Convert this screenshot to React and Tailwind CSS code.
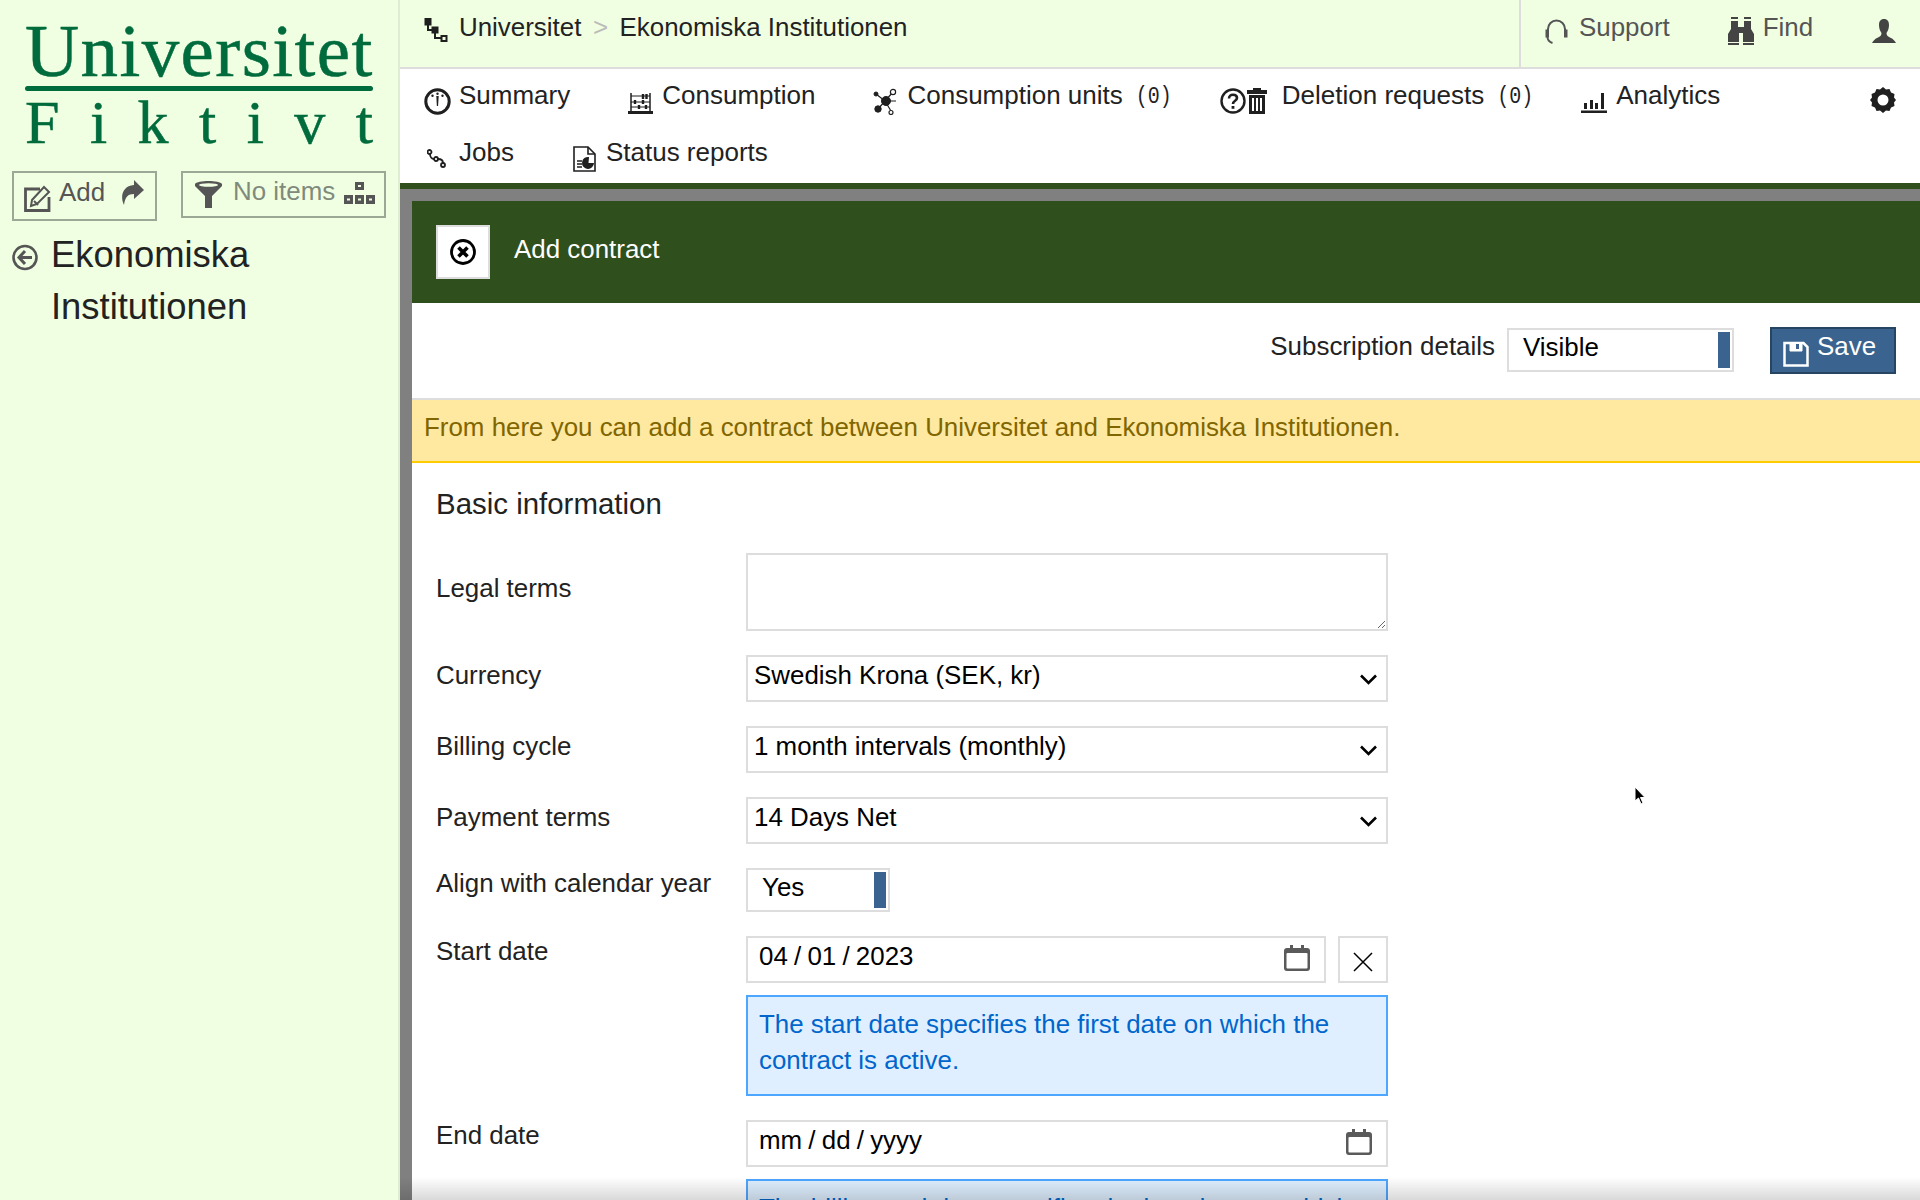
import React from 'react';

const ink = '#1f1f1f';

function Logo() {
  return (
    <div className="pt-[16px] px-[25px] text-[#006b3c] font-['Liberation_Serif',serif] [-webkit-text-stroke:0.5px_#006b3c]">
      <div className="text-[75px] leading-[70px] tracking-[1.4px] whitespace-nowrap">Universitet</div>
      <div className="h-[5px] rounded-full bg-[#006b3c]" />
      <div className="flex justify-between text-[62px] leading-[66px] mt-[-2px]">
        {'Fiktivt'.split('').map((c, i) => <span key={i}>{c}</span>)}
      </div>
    </div>
  );
}

const IconBreadcrumb = () => (
  <svg width="24" height="24" viewBox="0 0 24 24" fill="none" stroke={ink}>
    <rect x="1" y="0" width="6" height="7" fill={ink} />
    <rect x="8" y="9" width="6" height="6" fill={ink} />
    <rect x="17.500" y="18" width="5" height="5" strokeWidth="2" />
    <path d="M4 7v5h4M11 15v5h6" strokeWidth="2" />
  </svg>
);

const IconSupport = () => (
  <svg width="23" height="28" viewBox="0 0 23 28" fill="none" stroke="#555">
    <path d="M3 16V11a8.500 8.500 0 0 1 17 0v5" strokeWidth="2" />
    <rect x="1" y="12" width="2.500" height="7" fill="#555" />
    <rect x="19.500" y="12" width="2.500" height="7" fill="#555" />
    <path d="M2.500 19c0 3 2 5 5 6" strokeWidth="2" />
  </svg>
);

const IconFind = () => (
  <svg width="26" height="28" viewBox="0 0 26 28" fill="#444">
    <rect x="3" y="0" width="7" height="2" />
    <rect x="16" y="0" width="7" height="2" />
    <path d="M3 4h7v6h6V4h7v8l3 5v8H15V16h-4v9H0v-8l3-5z" />
    <rect x="0" y="26" width="11" height="2" />
    <rect x="15" y="26" width="11" height="2" />
  </svg>
);

const IconUser = () => (
  <svg width="24" height="24" viewBox="0 0 24 24" fill="#444">
    <path d="M12 0c3.500 0 5 2.500 5 6 0 3-1 6-2.500 8 0 2.500 1.500 3.500 4.500 5 2 1 3.500 2.500 5 5H0c1.500-2.500 3-4 5-5 3-1.500 4.500-2.500 4.500-5C8 12 7 9 7 6c0-3.500 1.500-6 5-6z" />
  </svg>
);

const IconGauge = () => (
  <svg width="27" height="27" viewBox="0 0 27 27" fill="none" stroke={ink}>
    <circle cx="13.500" cy="13.500" r="11.700" strokeWidth="3" />
    <path d="M12.300 8h2.400l-.6 10h-1.200z" fill={ink} stroke="none" />
    <circle cx="13.500" cy="5.800" r="1.200" fill={ink} stroke="none" />
    <circle cx="8.500" cy="7.800" r="1.200" fill={ink} stroke="none" />
    <circle cx="18.500" cy="7.800" r="1.200" fill={ink} stroke="none" />
  </svg>
);

const IconAbacus = () => (
  <svg width="25" height="22" viewBox="0 0 25 22" fill="none" stroke={ink}>
    <path d="M3 1v18M22 1v18" strokeWidth="1.500" />
    <path d="M3 4h19M3 10h19M3 15h19" strokeWidth="1.200" />
    <path d="M0 20.500h25" strokeWidth="3" />
    <path d="M15 2v5M18.500 2v5M7 8v4M15 8v4M11 13v4M18 13v4" strokeWidth="2.400" />
  </svg>
);

const IconNetwork = () => (
  <svg width="24" height="27" viewBox="0 0 24 27" fill="none" stroke={ink}>
    <path d="M12 13L3 6M12 13L5 21M12 13L20 4M12 13h11M12 13l6 10" strokeWidth="1.200" />
    <circle cx="13" cy="13" r="4.500" fill={ink} />
    <circle cx="3" cy="6" r="2" fill={ink} />
    <circle cx="5" cy="21" r="3.200" fill={ink} />
    <circle cx="20" cy="4" r="2.600" fill="#fff" strokeWidth="1.200" />
    <circle cx="18" cy="24.500" r="2" fill="#fff" strokeWidth="1.200" />
  </svg>
);

const IconQuestion = () => (
  <svg width="26" height="26" viewBox="0 0 26 26" fill="none" stroke={ink}>
    <circle cx="13" cy="13" r="11.500" strokeWidth="2.400" />
    <path d="M9 10.500c0-2.500 1.800-3.700 4-3.700s4 1.200 4 3.200c0 3-4 2.500-4 6" strokeWidth="2.600" />
    <rect x="11.600" y="18" width="2.800" height="2.800" fill={ink} stroke="none" />
  </svg>
);

const IconTrash = () => (
  <svg width="20" height="26" viewBox="0 0 20 26" fill={ink}>
    <path d="M6 0h8v2h6v4H0V2h6z" />
    <path d="M2 7h16v19H2zM5 10v13h2V10zM9 10v13h2V10zM13 10v13h2V10z" fillRule="evenodd" />
  </svg>
);

const IconBars = () => (
  <svg width="26" height="20" viewBox="0 0 26 20" fill={ink}>
    <rect x="3" y="10" width="3" height="6" />
    <rect x="9" y="7" width="3" height="9" />
    <rect x="14" y="10" width="3" height="6" />
    <rect x="20" y="0" width="3" height="16" />
    <rect x="0" y="17.500" width="26" height="2.500" />
  </svg>
);

const IconGear = () => (
  <svg width="26" height="26" viewBox="0 0 26 26" fill={ink}>
    <path fillRule="evenodd" d="M13 0l3 2.500 3.500-.5 1.500 3.500 3.500 1.500-.5 3.500 2 2.500-2 2.500.5 3.500-3.500 1.500-1.500 3.500-3.500-.5-3 2.500-3-2.500-3.500.5L5 20.500 1.500 19l.5-3.500L0 13l2-2.500-.5-3.500L5 5.500 6.500 2l3.500.5zM13 7.500a5.500 5.500 0 1 0 0 11 5.500 5.500 0 0 0 0-11z" />
  </svg>
);

const IconJobs = () => (
  <svg width="19" height="19" viewBox="0 0 19 19" fill="none" stroke={ink} strokeWidth="1.800">
    <circle cx="2.500" cy="3" r="2" />
    <circle cx="9" cy="10" r="2" />
    <circle cx="16" cy="16" r="2" />
    <path d="M3 5c0 3 2 5 4 5M11 10c3 0 5 1 5 4" />
  </svg>
);

const IconReport = () => (
  <svg width="23" height="26" viewBox="0 0 23 26" fill="none" stroke={ink}>
    <path d="M1 1h14l7 7v17H1z" strokeWidth="1.600" />
    <path d="M15 1v7h7" strokeWidth="1.600" />
    <path d="M4 15h5M4 18h5M4 21h5" strokeWidth="1.600" />
    <path d="M16 11a6 6 0 1 0 5 6h-5.500z" fill={ink} stroke="none" />
  </svg>
);

const IconClose = () => (
  <svg width="26" height="26" viewBox="0 0 26 26" fill="none" stroke="#000">
    <circle cx="13" cy="13" r="11.500" strokeWidth="2.800" />
    <path d="M8.500 8.500l9 9M17.500 8.500l-9 9" strokeWidth="3.600" />
  </svg>
);

const IconSave = () => (
  <svg width="26" height="26" viewBox="0 0 26 26" fill="none" stroke="#fff">
    <path d="M1.500 2h19l4 4v18.500h-23z" strokeWidth="2.500" />
    <path d="M7 2v8h12V2" fill="#fff" strokeWidth="1" />
    <rect x="13" y="3" width="3" height="5" fill="#3a648f" stroke="none" />
  </svg>
);

const IconEdit = () => (
  <svg width="27" height="27" viewBox="0 0 27 27" fill="none" stroke="#555">
    <path d="M16 4H1.500v21.500H25V12" strokeWidth="2.800" />
    <path d="M8 15L20 2l5 5-12 12-6 2z" strokeWidth="2" />
    <path d="M10 16l4 4" strokeWidth="2" />
  </svg>
);

const IconShare = () => (
  <svg width="23" height="25" viewBox="0 0 23 25" fill="#555">
    <path d="M13 0l10 10-10 9v-5C7 14 4 17 3 25 -1 17 1 6 13 5z" />
  </svg>
);

const IconFunnel = () => (
  <svg width="27" height="27" viewBox="0 0 27 27" fill="#555">
    <path d="M0 3c2-4 25-4 27 0v2L17 15v12h-7V15L0 5z" />
    <ellipse cx="13.500" cy="4" rx="9.500" ry="1.800" fill="#f0ffe2" />
  </svg>
);

const IconTree = () => (
  <svg width="31" height="22" viewBox="0 0 31 22" fill="#555">
    <path fillRule="evenodd" d="M11 0h9v8h-9zM14 3v2h3V3zM0 13h9v9H0zM3 16.500v2h3v-2zM11 13h9v9h-9zM14 16.500v2h3v-2zM22 13h9v9h-9zM25 16.500v2h3v-2z" />
  </svg>
);

const IconBack = () => (
  <svg width="26" height="27" viewBox="0 0 26 27" fill="none" stroke="#555">
    <circle cx="13" cy="13.500" r="11.500" strokeWidth="2.600" />
    <path d="M13 7l-6 6.500 6 6.500M7 13.500h13" strokeWidth="3" />
  </svg>
);

const IconX = () => (
  <svg width="20" height="20" viewBox="0 0 20 20" fill="none" stroke="#000" strokeWidth="1.500">
    <path d="M1 1l18 18M19 1L1 19" />
  </svg>
);

const IconCalendar = () => (
  <svg width="26" height="26" viewBox="0 0 26 26" fill="none">
    <path d="M6 0h3v3h8V0h3v3h3a3 3 0 0 1 3 3v17a3 3 0 0 1-3 3H3a3 3 0 0 1-3-3V6a3 3 0 0 1 3-3h3z" fill="#5a5a5a" />
    <rect x="2.500" y="8" width="21" height="15.500" rx="1" fill="#fff" />
  </svg>
);

const IconChevron = () => (
  <svg width="17" height="11" viewBox="0 0 17 11" fill="none" stroke="#000" strokeWidth="2.600">
    <path d="M1 1.500l7.500 7.500L16 1.500" />
  </svg>
);

function NavItem({ icon, iconTop, gap, left, count, children }) {
  return (
    <div className="flex items-start" style={{ marginLeft: left }}>
      <div style={{ marginTop: iconTop, marginRight: gap }} className="flex gap-[1px]">{icon}</div>
      <span className="whitespace-nowrap">{children}</span>
      {count && <span className="ml-[13px] mt-[2px] font-['Liberation_Mono',monospace] text-[20px] scale-y-[1.2]">(0)</span>}
    </div>
  );
}

function Toggle({ label, className }) {
  return (
    <div className={`h-[44px] border-2 border-[#ddd] bg-white flex items-start justify-between pl-[14px] pr-[2px] py-[2px] text-black ${className}`}>
      <span className="leading-[32px] mt-[-1px]">{label}</span>
      <div className="w-[12px] h-[36px] bg-[#3a648f]" />
    </div>
  );
}

function Select({ value }) {
  return (
    <div className="relative">
      <select
        defaultValue={value}
        className="block w-full h-[47px] border-2 border-[#ddd] bg-white text-black pl-[6px] pr-[30px] pb-[8px] rounded-none appearance-none text-[25.92px]"
      >
        <option>{value}</option>
      </select>
      <div className="absolute right-[11px] top-[19px] pointer-events-none"><IconChevron /></div>
    </div>
  );
}

function DateField({ value, className }) {
  return (
    <div className={`h-[47px] border-2 border-[#ddd] bg-white text-black flex items-start justify-between pl-[11px] pr-[14px] ${className}`}>
      <span className="mt-[2px] whitespace-nowrap [word-spacing:-1px]">{value}</span>
      <div className="mt-[7px]"><IconCalendar /></div>
    </div>
  );
}

function Help({ children }) {
  return (
    <div className="border-2 border-[#4da6ff] bg-[#dfefff] text-[#0066cc] px-[11px] pt-[9px] pb-[16px] leading-[36px]">
      {children}
    </div>
  );
}

function Row({ label, top = 4, children }) {
  return (
    <div className="flex mb-[24px]">
      <div className="w-[310px] shrink-0 leading-[32px]" style={{ marginTop: top }}>{label}</div>
      <div className="w-[642px] shrink-0">{children}</div>
    </div>
  );
}

export default function App() {
  return (
    <div className="relative flex h-[1200px] overflow-hidden bg-white text-[25.92px] leading-[32px] text-[#222] font-['Liberation_Sans',Arial,sans-serif]">
      {/* Sidebar */}
      <aside className="w-[400px] shrink-0 bg-[#f0ffe2] border-r-2 border-[#dfeed2]">
        <Logo />
        <div className="flex items-start mt-[16px] pl-[12px]">
          <div className="w-[145px] h-[50px] border-2 border-[#9ba896] flex items-start text-[#555]">
            <div className="mt-[12px] ml-[10px]"><IconEdit /></div>
            <span className="ml-[8px] mt-[3px]">Add</span>
            <div className="ml-[16px] mt-[7px]"><IconShare /></div>
          </div>
          <div className="ml-[24px] w-[205px] h-[47px] border-2 border-[#9ba896] flex items-start text-[#808a7c]">
            <div className="mt-[8px] ml-[12px]"><IconFunnel /></div>
            <span className="ml-[11px] mt-[2px] whitespace-nowrap">No items</span>
            <div className="ml-[9px] mt-[9px]"><IconTree /></div>
          </div>
        </div>
        <div className="flex items-start pl-[12px] mt-[8px] text-[36.4px] leading-[52px]">
          <div className="mt-[15px] mr-[13px]"><IconBack /></div>
          <div>Ekonomiska<br />Institutionen</div>
        </div>
      </aside>

      {/* Main column */}
      <main className="flex-1 min-w-0 flex flex-col">
        <header className="h-[69px] shrink-0 flex bg-[#f0ffe2] border-b-2 border-[#ddd]">
          <div className="flex-1 flex items-start pl-[24px] pt-[11px]">
            <div className="mt-[7px] mr-[11px]"><IconBreadcrumb /></div>
            <span>Universitet</span>
            <span className="mx-[11.500px] text-[#bbb]">&gt;</span>
            <span>Ekonomiska Institutionen</span>
          </div>
          <div className="w-[401px] border-l-2 border-[#ddd] flex items-start pt-[11px] pl-[24px] text-[#555]">
            <div className="mt-[7px] mr-[11px]"><IconSupport /></div>
            <span>Support</span>
            <div className="ml-[58px] mt-[6px] mr-[9px]"><IconFind /></div>
            <span>Find</span>
            <div className="ml-[59px] mt-[8px]"><IconUser /></div>
          </div>
        </header>

        <nav className="h-[114px] shrink-0 pt-[10px] pl-[24px] text-[26px]">
          <div className="flex items-start h-[57px]">
            <NavItem left={0} icon={<IconGauge />} iconTop={9} gap={8}>Summary</NavItem>
            <NavItem left={58} icon={<IconAbacus />} iconTop={13} gap={9}>Consumption</NavItem>
            <NavItem left={58} icon={<IconNetwork />} iconTop={9} gap={10} count>Consumption units</NavItem>
            <NavItem left={48} icon={<><IconQuestion /><IconTrash /></>} iconTop={9} gap={15} count>Deletion requests</NavItem>
            <NavItem left={48} icon={<IconBars />} iconTop={14} gap={9}>Analytics</NavItem>
            <div className="ml-auto mr-[24px] mt-[8px]"><IconGear /></div>
          </div>
          <div className="flex items-start">
            <NavItem left={3} icon={<IconJobs />} iconTop={13} gap={13}>Jobs</NavItem>
            <NavItem left={59} icon={<IconReport />} iconTop={10} gap={10}>Status reports</NavItem>
          </div>
        </nav>
        <div className="h-[6px] shrink-0 bg-[#2f4f1d]" />

        <div className="flex-1 min-h-0 bg-[#808080] pl-[12px] pt-[12px]">
          <div className="bg-white">
            <div className="h-[102px] bg-[#2f4f1d] flex items-start pl-[24px] pt-[24px] text-white">
              <div className="w-[54px] h-[54px] bg-white border-2 border-[#ddd] text-black flex items-center justify-center">
                <IconClose />
              </div>
              <span className="ml-[24px] mt-[8px]">Add contract</span>
            </div>
            <div className="h-[97px] border-b-2 border-[#ddd] flex items-start justify-end pr-[24px] pt-[24px]">
              <span className="mt-[3px] mr-[12px]">Subscription details</span>
              <Toggle label="Visible" className="w-[227px] mt-[1px]" />
              <button className="ml-[36px] w-[126px] h-[47px] bg-[#3a648f] border-2 border-[#254563] text-white flex items-start pl-[11px]">
                <div className="mt-[12px] mr-[8px]"><IconSave /></div>
                <span className="mt-[1px]">Save</span>
              </button>
            </div>
            <div className="h-[63px] bg-[#ffe89f] border-b-2 border-[#ffcc00] text-[#806600] pl-[12px] pt-[11px]">
              From here you can add a contract between Universitet and Ekonomiska Institutionen.
            </div>
            <div className="pl-[24px] pt-[21px]">
              <h2 className="text-[29.44px] leading-[40px] mb-[29px]">Basic information</h2>
              <Row label="Legal terms" top={19}>
                <textarea className="block w-full h-[78px] border-2 border-[#ddd] bg-white" />
              </Row>
              <Row label="Currency"><Select value="Swedish Krona (SEK, kr)" /></Row>
              <Row label="Billing cycle"><Select value="1 month intervals (monthly)" /></Row>
              <Row label="Payment terms"><Select value="14 Days Net" /></Row>
              <Row label="Align with calendar year" top={-1}><Toggle label="Yes" className="w-[144px]" /></Row>
              <Row label="Start date" top={-1}>
                <div className="flex gap-[12px] mb-[12px]">
                  <DateField value="04 / 01 / 2023" className="flex-1 min-w-0" />
                  <button className="w-[50px] h-[47px] border-2 border-[#ddd] bg-white flex items-center justify-center pt-[4px]"><IconX /></button>
                </div>
                <Help>The start date specifies the first date on which the contract is active.</Help>
              </Row>
              <Row label="End date" top={-1}>
                <DateField value="mm / dd / yyyy" className="mb-[12px]" />
                <Help>The billing end date specifies the last date on which the contract is billed.</Help>
              </Row>
            </div>
          </div>
        </div>
      </main>

      {/* bottom fade */}
      <div className="absolute left-[400px] right-0 bottom-0 h-[23px] pointer-events-none bg-gradient-to-b from-transparent to-black/15" />

      {/* mouse pointer */}
      <svg className="absolute left-[1634px] top-[786px]" width="12" height="20" viewBox="0 0 12 20">
        <path d="M1 1v14l3.500-3 2.500 6 2-1-2.500-5.500H11z" fill="#000" stroke="#fff" strokeWidth="1" />
      </svg>
    </div>
  );
}
